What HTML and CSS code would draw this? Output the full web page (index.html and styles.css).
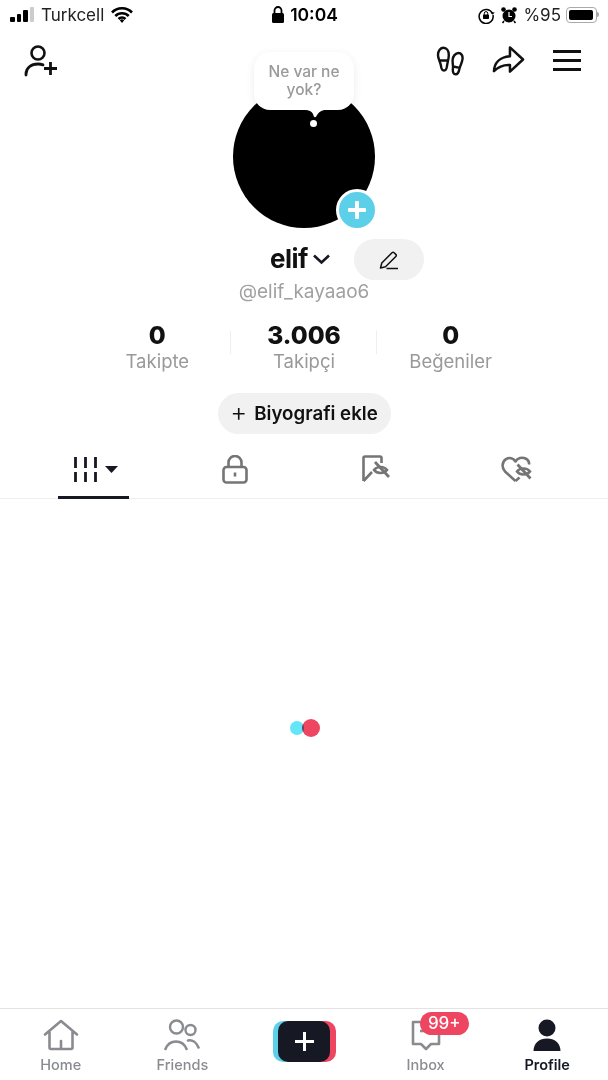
FILE: index.html
```html
<!DOCTYPE html>
<html lang="en">
<head>
  <meta charset="UTF-8">
  <title>Profile</title>
  <link rel="stylesheet" href="styles.css">
</head>
<body>
  <div class="app">
    <div class="status">
      <div class="status-left">
        <div class="signal"><i class="s1"></i><i class="s2"></i><i class="s3"></i><i class="s4"></i></div>
        <span>Turkcell</span>
        <svg width="22" height="16" viewBox="0 0 22 16"><path d="M1 5.500a14 14 0 0 1 20 0M4.300 9a9.400 9.400 0 0 1 13.400 0M7.500 12a5 5 0 0 1 7 0" fill="none" stroke="#000" stroke-width="2.600"/><path d="M11 16l-2.200-2.700a3.200 3.200 0 0 1 4.400 0z" fill="#000"/></svg>
      </div>
      <div class="status-mid">
        <svg width="14" height="19" viewBox="0 0 14 19"><path d="M3.500 9V5.500a3.500 3.500 0 0 1 7 0V9" fill="none" stroke="#000" stroke-width="1.800"/><rect x="1" y="8" width="12" height="10" rx="1.500" fill="#000"/></svg>
        <span>10:04</span>
      </div>
      <div class="status-right">
        <svg width="18" height="18" viewBox="0 0 18 18"><path d="M15.500 7.500A7 7 0 1 0 16 9" fill="none" stroke="#000" stroke-width="1.500"/><path d="M13.500 6.500l2.200 2.200 2-2.400z" fill="#000"/><rect x="6" y="8.500" width="6" height="4.500" rx=".7" fill="#000"/><path d="M7.300 9V7.300a1.700 1.700 0 0 1 3.400 0V9" fill="none" stroke="#000" stroke-width="1"/></svg>
        <svg class="alarm" width="18" height="18" viewBox="0 0 18 18"><circle cx="9" cy="10" r="6.500" fill="#000"/><circle cx="3.500" cy="3.500" r="2.300" fill="#000"/><circle cx="14.500" cy="3.500" r="2.300" fill="#000"/><path d="M9 6v4.500h3" fill="none" stroke="#fff" stroke-width="1.200"/><path d="M4 15l-1.500 2M14 15l1.500 2" stroke="#000" stroke-width="1.500"/></svg>
        <span>%95</span>
        <div class="battery"><div class="battery-fill"></div></div>
        <div class="battery-tip"></div>
      </div>
    </div>

    <div class="topbar">
      <svg width="36" height="34" viewBox="0 0 36 34"><circle cx="14" cy="10" r="6.500" fill="none" stroke="#111" stroke-width="2.600"/><path d="M2 32v-1c0-6 5-10 12-10 2 0 3.500.3 5 .9" fill="none" stroke="#111" stroke-width="2.800" stroke-linecap="round"/><path d="M20 26.500h13M26.500 20v13" stroke="#111" stroke-width="2.800" transform="translate(0 -1)"/></svg>
      <div class="top-actions">
        <svg width="28" height="30" viewBox="0 0 28 30"><path d="M7.500 1.800c3 0 5.300 3 5.300 7.200 0 4-1.300 7-1.800 11-.3 3-1 4.500-3 4.500S5.300 23 5 20C4.500 16 2 13 2 9c0-4.200 2.500-7.200 5.500-7.200zM3.800 14.500h8" fill="none" stroke="#111" stroke-width="2.400" stroke-linejoin="round"/><path d="M22.500 7c2.700 0 4.500 2.500 4 6.200-.5 4-2.300 6-3 9.300-.6 3.500-1.700 5.800-3.800 5.800-2.200 0-3.200-2.500-2.800-5.300.4-3-.4-5.500-.3-9C16.700 10.300 19.500 7 22.500 7zM17.500 20.500l6 1.300" fill="none" stroke="#111" stroke-width="2.400" stroke-linejoin="round"/></svg>
        <svg class="share" width="33" height="31" viewBox="0 0 34 32"><path d="M18.500 2.500L32 15 18.500 27.500v-6.800C11 20.200 6 23 2 27c.3-8 5.500-14.500 16.500-15.500z" fill="none" stroke="#111" stroke-width="2.600" stroke-linejoin="round"/></svg>
        <div class="burger"><i></i><i></i><i></i></div>
      </div>
    </div>

    <div class="profile">
      <div class="avatar">
        <div class="bubble">
          Ne var ne yok?
          <svg class="bubble-tail" width="18" height="9" viewBox="0 0 18 9"><path d="M0 0h18c-4 1-6 3-7.500 6-1 1.800-2.500 1.500-3-.5C7 3 5 .5 0 0z" fill="#fff"/></svg>
        </div>
        <div class="avatar-dot"></div>
        <div class="add-badge"><i></i><i class="v"></i></div>
      </div>

      <div class="name-row">
        <div class="name-wrap">
          <span class="name">elif</span>
          <svg width="19" height="12" viewBox="0 0 19 12"><path d="M2 2.500l7.500 7 7.500-7" fill="none" stroke="#161823" stroke-width="2.600"/></svg>
        </div>
        <div class="edit-btn">
          <svg width="20" height="20" viewBox="0 0 20 20"><path d="M1.500 18l1.300-5L13 2.700a1.500 1.500 0 0 1 2.100 0l1.700 1.700a1.500 1.500 0 0 1 0 2.100L6.500 16.800z" fill="none" stroke="#111" stroke-width="1.500" stroke-linejoin="round"/><path d="M7.500 18.500H19" stroke="#111" stroke-width="1.500"/></svg>
        </div>
      </div>
      <div class="handle">@elif_kayaao6</div>

      <div class="stats">
        <div class="stat"><b>0</b><span>Takipte</span></div>
        <div class="stat"><b>3.006</b><span>Takipçi</span></div>
        <div class="stat"><b>0</b><span>Beğeniler</span></div>
      </div>

      <div class="bio-btn"><span class="bio-plus">+</span> Biyografi ekle</div>
    </div>

    <div class="tabs">
      <div class="tab active">
        <svg width="23" height="25" viewBox="0 0 23 25"><path d="M1.500 0v11M11.500 0v11M21.500 0v11M1.500 15v10M11.500 15v10M21.500 15v10" stroke="#161823" stroke-width="2.800"/></svg>
        <svg class="caret" width="13" height="7" viewBox="0 0 13 7"><path d="M0 0h13L6.500 7z" fill="#161823"/></svg>
      </div>
      <div class="tab">
        <svg width="26" height="29" viewBox="0 0 26 29"><rect x="1.500" y="12" width="23" height="15.500" rx="3" fill="none" stroke="#757575" stroke-width="2.600"/><path d="M6.500 12V7.500a6.500 6.500 0 0 1 13 0V12" fill="none" stroke="#757575" stroke-width="2.600"/><path d="M13 17.500v4" stroke="#757575" stroke-width="2.600"/></svg>
      </div>
      <div class="tab">
        <svg width="28" height="28" viewBox="0 0 28 28"><path d="M1.500 26V3c0-1 .5-1.500 1.500-1.500h15c1 0 1.500.5 1.500 1.500v5M1.500 26L10 17" fill="none" stroke="#757575" stroke-width="2.600" stroke-linejoin="round"/><path d="M12 15c3-4 10-4 13 0-3 4-10 4-13 0z" fill="none" stroke="#757575" stroke-width="2.600"/><path d="M13 7l14 15" stroke="#757575" stroke-width="2.800"/></svg>
      </div>
      <div class="tab">
        <svg width="31" height="27" viewBox="0 0 31 27"><path d="M14.500 25L4 15.500C.5 11.500.8 6 5 3.200c3.300-2 7.300-1 9.500 2.300C16.500 2 21 .8 24.500 2.500c2.500 1.200 3.700 3.500 3.700 6M14.500 25l4-3.500" fill="none" stroke="#757575" stroke-width="2.600" stroke-linejoin="round"/><path d="M16 15.500c3-4 10-4 13 0-3 4-10 4-13 0z" fill="none" stroke="#757575" stroke-width="2.600"/><path d="M16.500 8.500l13 14" stroke="#757575" stroke-width="2.800"/></svg>
      </div>
    </div>

    <div class="feed">
      <div class="loader"><i class="dot-cyan"></i><i class="dot-red"></i></div>
    </div>

    <div class="nav">
      <div class="nav-item">
        <svg width="36" height="32" viewBox="0 0 36 32"><path d="M2 15.500L18 2l16 13.500M6.500 13v15.500c0 1 .5 1.500 1.500 1.500h20c1 0 1.500-.5 1.500-1.500V13M18 22v8" fill="none" stroke="#8a8b91" stroke-width="2.600" stroke-linejoin="round" stroke-linecap="round"/></svg>
        <span>Home</span>
      </div>
      <div class="nav-item">
        <svg width="36" height="32" viewBox="0 0 36 32"><circle cx="12.500" cy="8" r="6.500" fill="none" stroke="#8a8b91" stroke-width="2.400"/><circle cx="26.500" cy="11" r="5" fill="none" stroke="#8a8b91" stroke-width="2.400"/><path d="M1.500 30c2-5 6-7.500 10.500-7.500S20.500 25 22.500 30M24 21.500c4.500-1 8.500 2 10.500 7" fill="none" stroke="#8a8b91" stroke-width="2.600" stroke-linecap="round"/></svg>
        <span>Friends</span>
      </div>
      <div class="nav-item">
        <div class="create">
          <div class="create-inner"><i></i><i class="v"></i></div>
        </div>
      </div>
      <div class="nav-item">
        <svg width="30" height="32" viewBox="0 0 30 32"><path d="M2 3h26v22h-8l-5 5-5-5H2z" fill="none" stroke="#8a8b91" stroke-width="2.600" stroke-linejoin="round"/><path d="M9 12h12" stroke="#8a8b91" stroke-width="2.600"/></svg>
        <span>Inbox</span>
        <div class="count">99+</div>
      </div>
      <div class="nav-item current">
        <svg width="30" height="32" viewBox="0 0 30 32"><circle cx="15" cy="9" r="8.500" fill="#161823"/><path d="M1.500 32c0-8 6-12.500 13.500-12.500S28.500 24 28.500 32z" fill="#161823"/></svg>
        <span>Profile</span>
      </div>
    </div>
  </div>
</body>
</html>
```

FILE: styles.css
```css
* {
  box-sizing: border-box;
}
body {
  margin: 0;
  background: #fff;
  font-family: Inter, "Liberation Sans", sans-serif;
  color: #161823;
}
svg {
  display: block;
}
.app {
  width: 608px;
  height: 1080px;
  display: flex;
  flex-direction: column;
  overflow: hidden;
}

/* status bar */
.status {
  height: 29px;
  display: grid;
  grid-template-columns: 1fr auto 1fr;
  align-items: center;
  padding: 0 9px 0 10px;
  font-size: 17px;
  color: #222;
}
.status-left, .status-mid, .status-right {
  display: flex;
  align-items: center;
}
.status-left {
  gap: 7px;
}
.status-mid {
  gap: 5px;
  font-weight: 600;
  font-size: 17.500px;
  color: #000;
}
.status-right {
  justify-content: flex-end;
  gap: 5px;
}
.signal {
  display: flex;
  align-items: flex-end;
  gap: 2px;
  height: 15px;
}
.signal i {
  width: 4.500px;
  background: #000;
  border-radius: 1px;
}
.s1 { height: 5px; }
.s2 { height: 8px; }
.s3 { height: 12px; }
.s4 { height: 15px; background: #ccc !important; }
.battery {
  width: 31px;
  height: 16px;
  border: 1px solid #aaa;
  border-radius: 4px;
  padding: 2px;
}
.battery-fill {
  height: 100%;
  width: 94%;
  background: #000;
  border-radius: 2px;
}
.battery-tip {
  width: 2px;
  height: 5px;
  background: #aaa;
  margin-left: -5px;
  border-radius: 0 2px 2px 0;
}

/* top icons */
.topbar {
  height: 56px;
  padding: 14px 27px 0 24px;
  display: flex;
  justify-content: space-between;
  align-items: flex-start;
}
.top-actions {
  display: flex;
  align-items: center;
  gap: 28px;
  padding-top: 2px;
}
.burger {
  width: 28px;
  display: flex;
  flex-direction: column;
  gap: 6px;
}
.burger i {
  display: block;
  height: 3px;
  background: #111;
}

/* profile head */
.profile {
  display: flex;
  flex-direction: column;
  align-items: center;
}
.avatar {
  position: relative;
  width: 142px;
  height: 143px;
  border-radius: 50%;
  background: #000;
}
.bubble {
  position: absolute;
  left: 21px;
  top: -33px;
  width: 100px;
  height: 58px;
  padding: 11px 10px;
  background: #fff;
  border-radius: 16px;
  box-shadow: 0 2px 8px rgba(0, 0, 0, 0.08);
  font-size: 15.500px;
  line-height: 18px;
  font-weight: 500;
  color: #999;
  text-align: center;
}
.bubble-tail {
  position: absolute;
  left: 52px;
  top: 58px;
}
.avatar-dot {
  position: absolute;
  left: 77px;
  top: 35px;
  width: 7px;
  height: 7px;
  border-radius: 50%;
  background: #fff;
}
.add-badge {
  position: absolute;
  left: 103px;
  top: 104px;
  width: 42px;
  height: 42px;
  border-radius: 50%;
  background: #5ccfe9;
  border: 3px solid #fff;
}
.add-badge i {
  position: absolute;
  left: 9px;
  top: 16px;
  width: 18px;
  height: 4px;
  background: #fff;
  border-radius: 1px;
}
.add-badge i.v {
  transform: rotate(90deg);
}
.name-row {
  position: relative;
  margin-top: 11px;
  width: 100%;
  height: 41px;
  display: flex;
  align-items: center;
  padding-left: 270px;
}
.name-wrap {
  display: flex;
  align-items: center;
  gap: 4px;
  margin-top: -2px;
}
.name {
  font-size: 26px;
  font-weight: 700;
  letter-spacing: -0.5px;
  color: #111;
}
.edit-btn {
  width: 70px;
  height: 41px;
  margin-left: 23px;
  border-radius: 21px;
  background: #f1f1f2;
  display: flex;
  align-items: center;
  justify-content: center;
}
.handle {
  margin-top: 0;
  font-size: 19px;
  line-height: 23px;
  color: #a0a0a0;
}
.stats {
  margin-top: 18px;
  display: flex;
  width: 440px;
}
.stat {
  flex: 1;
  position: relative;
  display: flex;
  flex-direction: column;
  align-items: center;
}
.stat + .stat::before {
  content: "";
  position: absolute;
  left: -1px;
  top: 10px;
  width: 1px;
  height: 23px;
  background: #eee;
}
.stat b {
  font-size: 24.500px;
  line-height: 29px;
  font-weight: 800;
  color: #111;
}
.stat span {
  font-size: 18.500px;
  line-height: 22px;
  color: #999;
}
.bio-btn {
  margin-top: 21px;
  width: 173px;
  height: 41px;
  border-radius: 21px;
  background: #f1f1f2;
  display: flex;
  align-items: center;
  justify-content: center;
  gap: 7px;
  font-size: 18.700px;
  font-weight: 600;
  color: #111;
}
.bio-plus {
  font-size: 26px;
  font-weight: 300;
  line-height: 1;
  margin-top: -3px;
}

/* tabs */
.tabs {
  margin-top: 15px;
  height: 50px;
  border-bottom: 1px solid #eee;
  padding-left: 58px;
  display: grid;
  grid-template-columns: repeat(4, 71px);
  column-gap: 70px;
}
.tab {
  display: flex;
  align-items: center;
  justify-content: center;
  gap: 8px;
  padding-bottom: 10px;
  height: 50px;
}
.tab.active {
  border-bottom: 3px solid #161823;
  padding: 0 0 7px 4px;
}

/* empty grid + loader */
.feed {
  flex: 1;
  display: flex;
  justify-content: center;
  padding: 219px 0 0 2px;
}
.loader {
  display: flex;
  align-items: center;
  height: 20px;
}
.dot-cyan {
  width: 14px;
  height: 14px;
  border-radius: 50%;
  background: #63e6f7;
}
.dot-red {
  width: 18px;
  height: 18px;
  border-radius: 50%;
  background: #ee4560;
  margin-left: -2px;
  mix-blend-mode: multiply;
}

/* bottom nav */
.nav {
  height: 72px;
  border-top: 1px solid #e3e3e3;
  display: grid;
  grid-template-columns: repeat(5, 1fr);
}
.nav-item {
  position: relative;
  display: flex;
  flex-direction: column;
  align-items: center;
  padding-top: 10px;
  color: #8a8b91;
  font-size: 14.500px;
  font-weight: 500;
}
.nav-item span {
  margin-top: 5px;
  line-height: 18px;
}
.nav-item.current {
  color: #161823;
  font-weight: 600;
}
.create {
  margin: 2px 0 0 1px;
  width: 63px;
  height: 41px;
  border-radius: 10px;
  background: linear-gradient(90deg, #5ccfe9 50%, #ee4560 50%);
  display: flex;
  justify-content: center;
}
.create-inner {
  position: relative;
  width: 52px;
  height: 41px;
  border-radius: 10px;
  background: #161823;
}
.create-inner i {
  position: absolute;
  left: 17px;
  top: 19px;
  width: 19px;
  height: 3px;
  background: #fff;
}
.create-inner i.v {
  transform: rotate(90deg);
}
.count {
  position: absolute;
  left: 55px;
  top: 3px;
  width: 49px;
  height: 23px;
  border-radius: 12px;
  background: #ee4560;
  color: #fff;
  font-size: 17px;
  font-weight: 500;
  line-height: 23px;
  text-align: center;
}
```
